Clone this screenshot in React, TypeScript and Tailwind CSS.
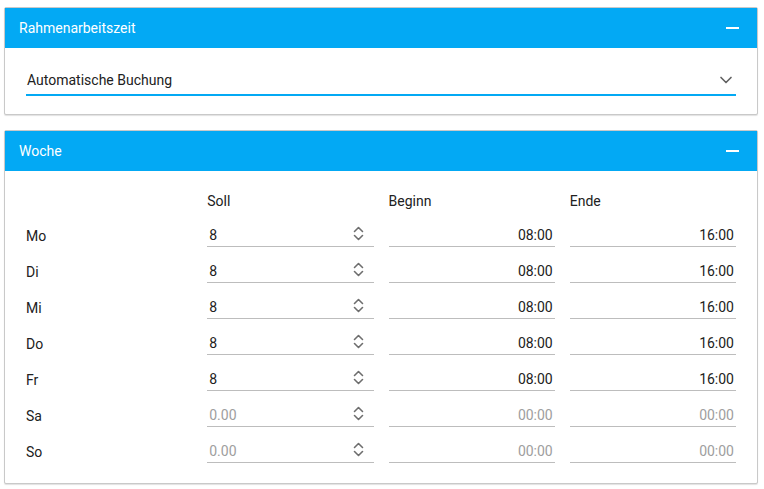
import { ChevronDown } from "lucide-react";

// Wochentage mit Sollzeiten
const DAYS = [
  { label: "Mo", soll: "8", begin: "08:00", end: "16:00" },
  { label: "Di", soll: "8", begin: "08:00", end: "16:00" },
  { label: "Mi", soll: "8", begin: "08:00", end: "16:00" },
  { label: "Do", soll: "8", begin: "08:00", end: "16:00" },
  { label: "Fr", soll: "8", begin: "08:00", end: "16:00" },
  { label: "Sa", soll: "", begin: "", end: "" },
  { label: "So", soll: "", begin: "", end: "" },
];

function Stepper() {
  return (
    <svg width="11" height="15" viewBox="0 0 11 15" fill="none" stroke="#6e6e6e" strokeWidth="1.6" strokeLinecap="round" strokeLinejoin="round">
      <polyline points="1.5,5.5 5.5,1.5 9.5,5.5" />
      <polyline points="1.5,9.5 5.5,13.5 9.5,9.5" />
    </svg>
  );
}

function Panel({ title, children }: { title: string; children: React.ReactNode }) {
  return (
    <section className="border border-[#c9c9c9] rounded-[2px] bg-white shadow-[0_1px_1px_rgba(0,0,0,0.12)]">
      <header className="h-10 bg-[#03a9f4] flex items-center justify-between pl-[14px] pr-[18px] text-white text-[14px]">
        <span>{title}</span>
        <span className="block w-[13px] h-[2px] bg-white" />
      </header>
      {children}
    </section>
  );
}

export default function App() {
  return (
    <div className="w-[764px] h-[489px] bg-white pl-[4px] pr-[6px] pt-[7px] font-['Roboto',sans-serif] text-[14px] text-[#212121]">
      <Panel title="Rahmenarbeitszeit">
        <div className="px-[21px] pt-[18px] pb-[18px]">
          <div className="h-[30px] flex items-center justify-between border-b-2 border-[#03a9f4] pl-[1px]">
            <span>Automatische Buchung</span>
            <ChevronDown size={20} strokeWidth={2} className="text-[#616161]" />
          </div>
        </div>
      </Panel>

      <div className="h-[15px]" />

      <Panel title="Woche">
        <div className="px-[21px] pt-[20px] pb-[20px]">
          <div className="grid grid-cols-4 gap-x-[15px] leading-5">
            <span />
            <span>Soll</span>
            <span>Beginn</span>
            <span>Ende</span>
          </div>
          {DAYS.map((d) => (
            <div key={d.label} className="grid grid-cols-4 gap-x-[15px] h-9 items-end">
              <div className="h-[26px] flex items-end pb-[1px] leading-5">{d.label}</div>
              <div className="h-[26px] flex items-end justify-between border-b border-[#bdbdbd] pl-[2px] pr-[10px] pb-[1px] leading-5">
                <span className={d.soll ? "" : "text-[#9e9e9e]"}>{d.soll || "0.00"}</span>
                <span className="self-center">
                  <Stepper />
                </span>
              </div>
              <div className="h-[26px] flex items-end justify-end border-b border-[#bdbdbd] pr-[2px] pb-[1px] leading-5">
                <span className={d.begin ? "" : "text-[#9e9e9e]"}>{d.begin || "00:00"}</span>
              </div>
              <div className="h-[26px] flex items-end justify-end border-b border-[#bdbdbd] pr-[2px] pb-[1px] leading-5">
                <span className={d.end ? "" : "text-[#9e9e9e]"}>{d.end || "00:00"}</span>
              </div>
            </div>
          ))}
        </div>
      </Panel>
    </div>
  );
}
